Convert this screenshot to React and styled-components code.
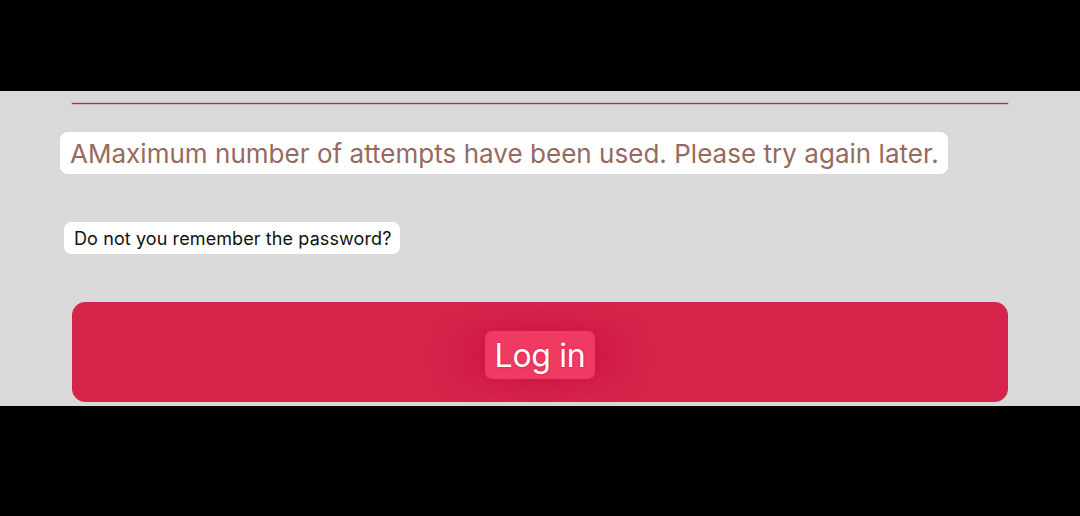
import React from "react";
import styled, { createGlobalStyle } from "styled-components";

const Global = createGlobalStyle`
  html, body { margin: 0; padding: 0; background: #000; }
  body { font-family: Inter, Roboto, sans-serif; }
`;

const Screen = styled.div`
  width: 1080px;
  height: 516px;
  background: #000;
  padding-top: 91px;
  box-sizing: border-box;
`;

const Panel = styled.section`
  background: #d9d9d9;
  height: 315px;
  box-sizing: border-box;
  padding: 12px 0 4px;
  display: flex;
  flex-direction: column;
  align-items: flex-start;
`;

const Divider = styled.div`
  align-self: stretch;
  height: 1px;
  margin: 0 72px 28px 72px;
  background: #7c4a44;
  box-shadow: 0 0 1px 0.5px rgba(205, 130, 120, 0.7);
`;

const Message = styled.div`
  margin-left: 60px;
  height: 42px;
  padding: 0 9px 0 10px;
  display: flex;
  align-items: center;
  background: #fff;
  border-radius: 8px;
  color: #966a5f;
  font-size: 26px;
  font-weight: 400;
  letter-spacing: 0.03px;
  white-space: nowrap;
`;

const Forgot = styled.div`
  margin: 48px 0 0 64px;
  height: 32px;
  padding: 0 9px 0 10px;
  display: flex;
  align-items: center;
  background: #fff;
  border-radius: 7px;
  color: #111;
  font-size: 18px;
  letter-spacing: 0.1px;
  white-space: nowrap;
`;

const LoginButton = styled.div`
  align-self: stretch;
  margin: 48px 72px 0 72px;
  height: 100px;
  box-sizing: border-box;
  background: #d6244a;
  border: 1px solid #c8284c;
  border-radius: 13px;
  display: flex;
  align-items: center;
  justify-content: center;
  padding-top: 6px;
`;

const LoginLabel = styled.span`
  height: 48px;
  padding: 0 10px;
  display: flex;
  align-items: center;
  background: #ef3a61;
  border-radius: 7px;
  color: #fff;
  font-size: 32px;
  letter-spacing: -0.3px;
  box-shadow: -34px 0 22px 2px rgba(205, 22, 72, 0.45),
    34px 0 22px 2px rgba(205, 22, 72, 0.45),
    0 0 14px 4px rgba(205, 22, 72, 0.5);
  text-shadow: 0 0 2px rgba(200, 20, 70, 0.9);
`;

export default function App() {
  return (
    <Screen>
      <Global />
      <Panel>
        <Divider />
        <Message>AMaximum number of attempts have been used. Please try again later.</Message>
        <Forgot>Do not you remember the password?</Forgot>
        <LoginButton>
          <LoginLabel>Log in</LoginLabel>
        </LoginButton>
      </Panel>
    </Screen>
  );
}
